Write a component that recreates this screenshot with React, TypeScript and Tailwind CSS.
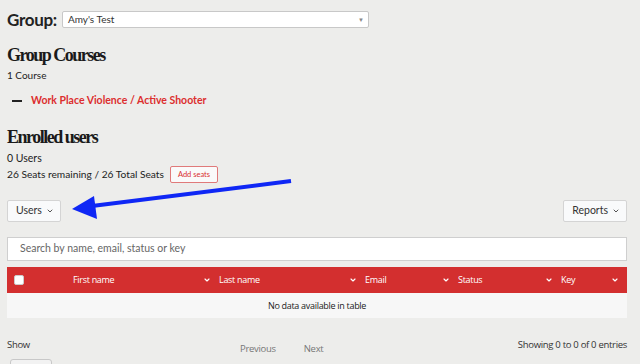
import { ChevronDown } from 'lucide-react';

const columns = [
  { label: 'First name', width: 'w-[146px]' },
  { label: 'Last name', width: 'w-[146px]' },
  { label: 'Email', width: 'w-[93px]' },
  { label: 'Status', width: 'w-[103px]' },
  { label: 'Key', width: 'flex-1' },
];

function DropButton({ label }: { label: string }) {
  return (
    <button className="flex h-[22px] items-center gap-[4px] rounded-[2px] border border-[#d4d4d4] bg-[#f9fafb] pl-[8px] pr-[6px] text-[10.5px] text-[#333]">
      {label}
      <ChevronDown size={8} strokeWidth={2.5} />
    </button>
  );
}

export default function App() {
  return (
    <div className="relative h-[364px] w-[640px] overflow-hidden bg-[#ededeb] pl-[7px] pr-[13px] font-['Lato','Noto_Sans',sans-serif] text-[#222]">
      {/* Group select */}
      <div className="flex items-center gap-[5px] pt-[11px]">
        <span className="text-[17px] font-bold leading-none tracking-[-0.3px] text-[#222]">Group:</span>
        <div className="flex h-[17px] w-[307px] items-center justify-between rounded-[2px] border border-[#c8c8c8] bg-white pl-[5px] pr-[4px]">
          <span className="text-[10px] text-[#333]">Amy's Test</span>
          <span className="text-[6px] text-[#888]">▼</span>
        </div>
      </div>

      {/* Group courses */}
      <h2 className="mt-[17px] font-['Liberation_Serif',serif] text-[18px] font-bold leading-[20px] tracking-[-1.5px] text-[#1a1a1a]">
        Group Courses
      </h2>
      <p className="mt-[3px] text-[10px] leading-[14px]">1 Course</p>
      <div className="mt-[11px] flex items-center gap-[9px] pl-[5px]">
        <span className="h-[1.5px] w-[10px] bg-[#222]" />
        <a className="text-[10.5px] font-bold text-[#dc2e2e]">Work Place Violence / Active Shooter</a>
      </div>

      {/* Enrolled users */}
      <h2 className="mt-[18px] font-['Liberation_Serif',serif] text-[18px] font-bold leading-[20px] tracking-[-1.5px] text-[#1a1a1a]">
        Enrolled users
      </h2>
      <p className="mt-[4px] text-[10.5px] leading-[14px]">0 Users</p>
      <div className="mt-[1px] flex items-center gap-[6px]">
        <span className="text-[10.2px] leading-[14px]">26 Seats remaining / 26 Total Seats</span>
        <button className="flex h-[17px] items-center rounded-[2px] border border-[#e07a7a] bg-[#fafafa] px-[7px] text-[7.5px] text-[#d9302f]">
          Add seats
        </button>
      </div>

      {/* Toolbar */}
      <div className="mt-[17px] flex items-center justify-between">
        <DropButton label="Users" />
        <DropButton label="Reports" />
      </div>

      {/* Search */}
      <div className="mt-[15px] flex h-[24px] items-center border border-[#cfcfcf] bg-white pl-[12px]">
        <span className="text-[10.5px] text-[#666]">Search by name, email, status or key</span>
      </div>

      {/* Table */}
      <div className="mt-[6px] font-['Open_Sans',sans-serif]">
        <div className="flex h-[26px] items-center bg-[#d32f2f] text-[9px] tracking-[-0.3px] text-white">
          <div className="w-[66px] pl-[7px]">
            <div className="h-[10px] w-[10px] rounded-[2px] border border-[#ccc] bg-white" />
          </div>
          {columns.map((c) => (
            <div key={c.label} className={`${c.width} flex items-center justify-between pr-[8px]`}>
              <span>{c.label}</span>
              <ChevronDown size={8} strokeWidth={3.5} />
            </div>
          ))}
        </div>
        <div className="flex h-[25px] items-center justify-center bg-[#f7f7f7] text-[9px] tracking-[-0.3px] text-[#222]">
          No data available in table
        </div>
      </div>

      {/* Footer */}
      <div className="mt-[21px] flex items-start font-['Open_Sans',sans-serif] text-[9.5px] tracking-[-0.3px]">
        <div className="w-[45px]">
          <div className="leading-[12px] text-[#333]">Show</div>
          <div className="mt-[8px] ml-[3px] flex h-[16px] w-[42px] items-start justify-between rounded-[3px] border border-[#c8c8c8] bg-[#f2f2f2] px-[5px] pt-[1px] text-[#333]">
            <span>50</span>
            <ChevronDown size={8} className="mt-[4px]" />
          </div>
        </div>
        <div className="mt-[3px] ml-[188px] flex gap-[28px] text-[#777]">
          <span>Previous</span>
          <span>Next</span>
        </div>
        <div className="ml-auto leading-[12px] text-[#333]">Showing 0 to 0 of 0 entries</div>
      </div>

      {/* Annotation arrow */}
      <svg className="absolute left-0 top-0" width="640" height="364" viewBox="0 0 640 364">
        <line x1="291" y1="181" x2="92" y2="206" stroke="#0f27f5" strokeWidth="4" />
        <polygon points="72,209 94,196 97,219" fill="#0f27f5" />
      </svg>
    </div>
  );
}
